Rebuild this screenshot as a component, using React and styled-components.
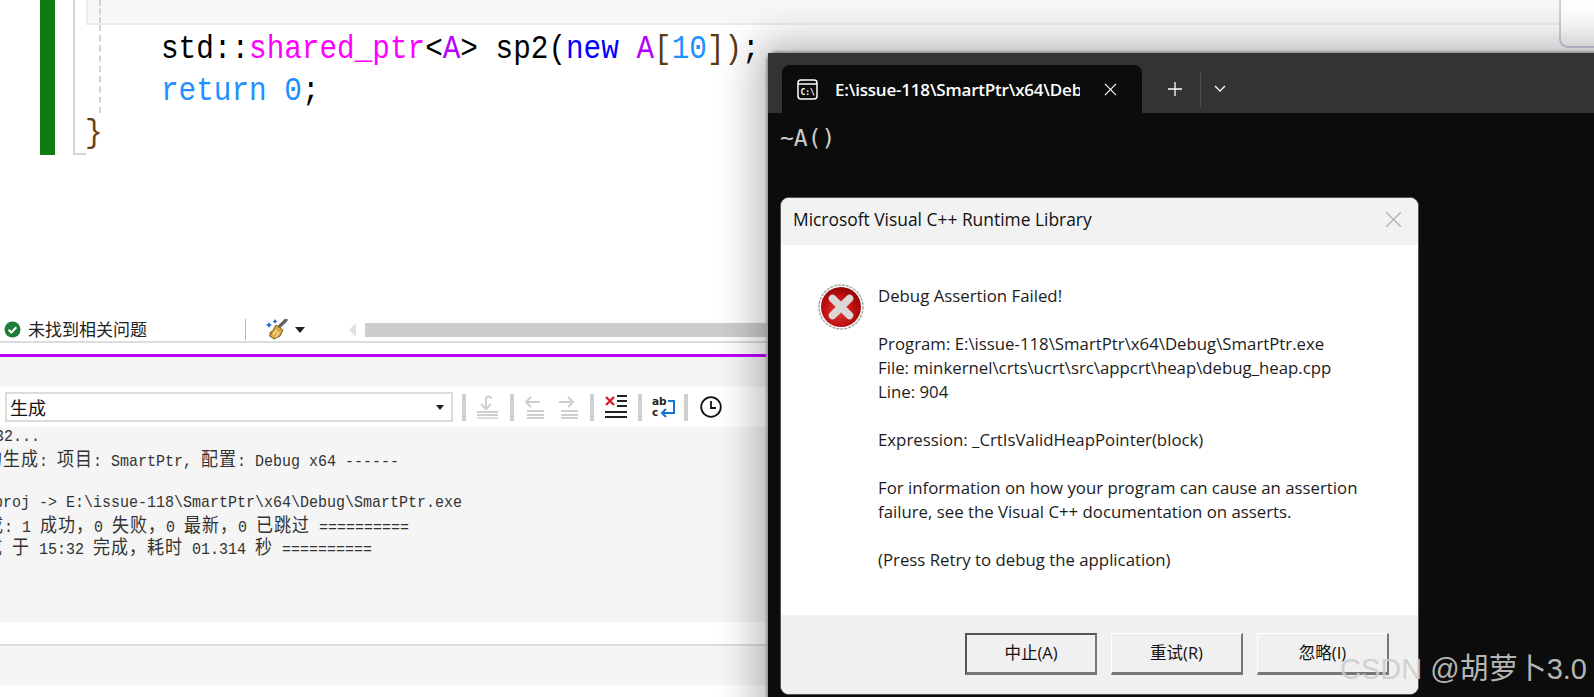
import React from 'react'
import styled, { createGlobalStyle } from 'styled-components'

const GlobalStyle = createGlobalStyle`
  html, body {
    margin: 0;
    padding: 0;
    background: #fff;
  }
`

const MONO = `'Liberation Mono', 'Noto Sans CJK SC', monospace`
const UI = `'Open Sans', 'Noto Sans CJK SC', sans-serif`

const Page = styled.div`
  position: relative;
  width: 1594px;
  height: 697px;
  overflow: hidden;
  background: #fff;
  display: flex;
  flex-direction: column;
`

/* editor */
const Editor = styled.section`
  height: 318px;
  display: flex;
  align-items: flex-start;
`
const ChangeBar = styled.div`
  width: 15px;
  height: 155px;
  margin-left: 40px;
  background: #107c10;
  flex: none;
`
const FoldLine = styled.div`
  width: 11px;
  height: 153px;
  margin-left: 18px;
  border-left: 2px solid #d4d4d4;
  border-bottom: 2px solid #d4d4d4;
  flex: none;
`
const CodeColumn = styled.div`
  flex: 1;
  min-width: 0;
`
const CurrentLine = styled.div`
  height: 23px;
  margin-right: 35px;
  padding-left: 11px;
  background: #f7f7f7;
  border-bottom: 2px solid #ececec;
  border-left: 2px solid #ececec;
`
const CurrentGuide = styled.div`
  height: 100%;
  border-left: 2px dashed #d2d2d2;
`
const Guide = styled.div`
  margin-left: 13px;
  border-left: 2px dashed #d2d2d2;
  padding-left: 60px;
  padding-top: 4px;
  height: 84px;
`
const CodeLine = styled.div`
  height: 42px;
  line-height: 42px;
  font-family: ${MONO};
  font-size: 29.35px;
  white-space: pre;
  color: #000;
  transform: scaleY(1.14);
`
const Brace = styled(CodeLine)`
  color: #6a4212;
  margin-left: -1px;
`
const Tok = styled.span`
  color: ${p => p.$c};
`

/* panel strip under the editor */
const StatusRow = styled.div`
  height: 23px;
  display: flex;
  align-items: center;
  border-bottom: 2px solid #dcdcdc;
`
const StatusText = styled.span`
  font-family: 'Noto Sans CJK SC', sans-serif;
  font-size: 17px;
  color: #222;
  margin-left: 7px;
  width: 217px;
  padding-bottom: 2px;
  flex: none;
`
const StatusIcon = styled.svg`
  margin-left: 4px;
  flex: none;
`
const StatusSep = styled.div`
  width: 1px;
  height: 21px;
  background: #b5b5b5;
  flex: none;
`
const BrushWrap = styled.div`
  display: flex;
  align-items: center;
  gap: 6px;
  margin-left: 20px;
  width: 83px;
  flex: none;
`
const BrushCaret = styled.div`
  width: 0;
  height: 0;
  border-left: 5px solid transparent;
  border-right: 5px solid transparent;
  border-top: 6px solid #222;
`
const ScrollArrow = styled.div`
  width: 0;
  height: 0;
  border-top: 7px solid transparent;
  border-bottom: 7px solid transparent;
  border-right: 7px solid #e2e2e2;
  flex: none;
`
const ScrollThumb = styled.div`
  flex: 1;
  height: 14px;
  margin-left: 9px;
  background: #cdcdcd;
`
const Accent = styled.div`
  height: 3px;
  margin-top: 11px;
  background: #bf00ff;
`
const PanelHeader = styled.div`
  height: 30px;
  background: #f5f5f5;
`
const Toolbar = styled.div`
  height: 40px;
  display: flex;
  align-items: center;
  padding-left: 5px;
`
const Combo = styled.div`
  width: 448px;
  height: 30px;
  box-sizing: border-box;
  border: 2px solid #dcdcdc;
  display: flex;
  align-items: center;
  justify-content: space-between;
  padding: 0 7px 0 3px;
  font-family: 'Noto Sans CJK SC', sans-serif;
  font-size: 18px;
  color: #111;
  flex: none;
`
const ComboCaret = styled.div`
  width: 0;
  height: 0;
  border-left: 4px solid transparent;
  border-right: 4px solid transparent;
  border-top: 5px solid #222;
`
const ToolSep = styled.div`
  width: 4px;
  height: 27px;
  background: #cfcfcf;
  flex: none;
  margin-left: ${p => p.$gap}px;
`
const ToolIcon = styled.svg`
  flex: none;
  margin-left: ${p => p.$gap}px;
`
const Output = styled.div`
  height: 195px;
  background: #f5f5f5;
  overflow: hidden;
`
const OutLine = styled.div`
  height: 22px;
  line-height: 22px;
  font-family: ${MONO};
  font-size: 15px;
  color: #333;
  white-space: pre;
  margin-left: ${p => p.$shift || 0}px;
  transform: scaleY(1.12);
`
const Wide = styled.span`
  font-family: 'Noto Sans CJK SC', sans-serif;
  font-size: 17px;
  line-height: 1;
  letter-spacing: 1px;
`
const Gap = styled.div`
  height: 22px;
  border-bottom: 2px solid #dcdcdc;
`
const BottomBand = styled.div`
  height: 39px;
  background: #f5f5f5;
`

/* terminal window sitting over the IDE */
const Terminal = styled.div`
  position: absolute;
  left: 768px;
  top: 53px;
  width: 860px;
  height: 680px;
  background: #0c0c0c;
  border-radius: 8px 0 0 0;
  box-shadow: 0 0 2px 2px #9a9a9a, 0 0 40px 12px rgba(0, 0, 0, 0.28);
`
const TitleBar = styled.div`
  height: 60px;
  background: #333;
  display: flex;
  align-items: flex-end;
  padding-left: 14px;
`
const Tab = styled.div`
  width: 360px;
  height: 48px;
  box-sizing: border-box;
  background: #0c0c0c;
  border-radius: 8px 8px 0 0;
  display: flex;
  align-items: center;
  padding-left: 15px;
  color: #fff;
  flex: none;
`
const TabTitle = styled.span`
  font-family: ${UI};
  font-size: 17px;
  font-weight: 600;
  letter-spacing: -0.2px;
  width: 245px;
  margin: 0 24px 0 17px;
  overflow: hidden;
  white-space: nowrap;
  flex: none;
`
const TabActions = styled.div`
  display: flex;
  align-items: center;
  height: 48px;
  margin-left: 25px;
`
const ActionSep = styled.div`
  width: 1px;
  height: 36px;
  background: #4c4c4c;
  margin: 0 13px 0 17px;
`
const Console = styled.div`
  padding: 12px 0 0 12px;
  font-family: 'DejaVu Sans Mono', monospace;
  font-size: 23px;
  line-height: 26px;
  color: #ccc;
`

const Dialog = styled.div`
  position: absolute;
  left: 12px;
  top: 144px;
  width: 639px;
  height: 498px;
  box-sizing: border-box;
  border: 1px solid #555;
  border-radius: 9px;
  overflow: hidden;
  background: #fff;
  display: flex;
  flex-direction: column;
`
const DialogHead = styled.div`
  height: 47px;
  box-sizing: border-box;
  background: #f2f2f2;
  display: flex;
  align-items: center;
  justify-content: space-between;
  padding: 0 16px 5px 12px;
  font-family: ${UI};
  font-size: 17.4px;
  color: #111;
  flex: none;
`
const DialogBody = styled.div`
  flex: 1;
  display: flex;
  padding: 39px 0 0 37px;
`
const ErrorIcon = styled.svg`
  flex: none;
`
const Message = styled.div`
  margin-left: 14px;
  font-family: ${UI};
  font-size: 16.8px;
  line-height: 24px;
  color: #1c1c1c;
  white-space: pre;
`
const DialogFoot = styled.div`
  height: 79px;
  background: #f0f0f0;
  display: flex;
  justify-content: flex-end;
  gap: 14px;
  padding: 18px 29px 0 0;
  box-sizing: border-box;
  flex: none;
`
const DlgButton = styled.div`
  width: 132px;
  height: 42px;
  box-sizing: border-box;
  padding-bottom: 3px;
  display: flex;
  align-items: center;
  justify-content: center;
  font-family: ${UI};
  font-size: 16.5px;
  color: #111;
  background: #f0f0f0;
  border-top: ${p => (p.$focus ? '2px solid #555' : '1px solid #fff')};
  border-left: ${p => (p.$focus ? '2px solid #555' : '1px solid #fff')};
  border-right: 2px solid #777;
  border-bottom: 3px solid #777;
`

const Watermark = styled.div`
  position: absolute;
  left: 1340px;
  top: 650px;
  font-family: 'Liberation Sans', 'Noto Sans CJK SC', sans-serif;
  font-size: 29px;
  line-height: 38px;
  color: rgba(205, 205, 205, 0.9);
  white-space: nowrap;
`
const Popup = styled.div`
  position: absolute;
  right: 0;
  top: -4px;
  width: 35px;
  height: 52px;
  box-sizing: border-box;
  background: #fff;
  border: 2px solid #cfcfe2;
  border-right: 0;
  border-radius: 0 0 0 9px;
`

const CheckIcon = () => (
  <StatusIcon width="17" height="17" viewBox="0 0 17 17">
    <circle cx="8.5" cy="8.5" r="8" fill="#1b7f37" />
    <path d="M4.6 8.8l2.7 2.7 5-5.2" fill="none" stroke="#fff" strokeWidth="2" />
  </StatusIcon>
)

const BrushIcon = () => (
  <svg width="23" height="21" viewBox="0 0 23 21">
    <path d="M13 8l7-7" stroke="#666" strokeWidth="3.4" strokeLinecap="round" />
    <path d="M10 6l7 5-3 6-6 3-5-3.5 3-2-2.5-.5 3.5-2.5z" fill="#d9a93c" stroke="#7d5a12" strokeWidth="1" />
    <path d="M7 16l4-5M10 18l3-5" stroke="#fff3cf" strokeWidth="1.2" />
    <path d="M3 3l1 2 2 1-2 1-1 2-1-2-2-1 2-1z" fill="#1e5fd0" />
    <path d="M9 0l.8 1.6L11.4 2.4l-1.6.8L9 4.8l-.8-1.6-1.6-.8 1.6-.8z" fill="#1e5fd0" />
  </svg>
)

const UnindentIcon = () => (
  <ToolIcon $gap={11} width="22" height="24" viewBox="0 0 22 24" fill="none" stroke="#cfcfcf" strokeWidth="2">
    <path d="M9 12V4a2.5 2.5 0 0 1 5 0M4 9l5 5 5-5" />
    <path d="M0 17h21M0 20h21" />
    <path d="M0 23h21" strokeWidth="1.5" />
  </ToolIcon>
)
const ArrowStackIcon = ({ gap, right }) => (
  <ToolIcon $gap={gap} width="21" height="24" viewBox="0 0 21 24" fill="none" stroke="#cfcfcf" strokeWidth="2">
    <path d={right ? 'M1 7h14M10 2l5 5-5 5' : 'M16 7H2M7 2L2 7l5 5'} />
    <path d="M3 16h17M3 20h17M3 23h17" />
  </ToolIcon>
)
const ClearIcon = () => (
  <ToolIcon $gap={11} width="23" height="27" viewBox="0 0 23 27" fill="none">
    <path d="M1 3l8 8M9 3l-8 8" stroke="#d81e2c" strokeWidth="2.4" />
    <path d="M12 2h10M12 7h10M12 12h10M0 18h22M0 23h22" stroke="#222" strokeWidth="2" />
  </ToolIcon>
)
const WrapIcon = () => (
  <ToolIcon $gap={10} width="24" height="25" viewBox="0 0 24 25" fill="none">
    <text x="0" y="10" fontFamily="'DejaVu Sans'" fontWeight="700" fontSize="10.5" fill="#222">ab</text>
    <text x="0" y="21" fontFamily="'DejaVu Sans'" fontWeight="700" fontSize="10.5" fill="#222">c</text>
    <path d="M16 6h6v12H10M14 14l-4 4 4 4" stroke="#1673d1" strokeWidth="2" />
  </ToolIcon>
)
const ClockIcon = () => (
  <ToolIcon $gap={12} width="22" height="22" viewBox="0 0 22 22" fill="none" stroke="#111" strokeWidth="1.8">
    <circle cx="11" cy="11" r="9.8" />
    <path d="M11 5v7h5" />
  </ToolIcon>
)

const ShellIcon = () => (
  <svg width="21" height="21" viewBox="0 0 21 21" fill="none">
    <rect x="1" y="1" width="19" height="19" rx="3" stroke="#fff" strokeWidth="1.5" />
    <path d="M1 5h19" stroke="#fff" strokeWidth="1.5" />
    <text x="3.4" y="15.5" fontFamily="'DejaVu Sans Mono'" fontWeight="700" fontSize="8" fill="#fff">C:\</text>
  </svg>
)
const CloseGlyph = ({ size, color, stroke }) => (
  <svg width={size} height={size} viewBox="0 0 14 14" fill="none" stroke={color} strokeWidth={stroke}>
    <path d="M1 1l12 12M13 1L1 13" />
  </svg>
)
const PlusIcon = () => (
  <svg width="16" height="16" viewBox="0 0 16 16" stroke="#fff" strokeWidth="1.3">
    <path d="M8 1v14M1 8h14" />
  </svg>
)
const ChevronIcon = () => (
  <svg width="12" height="8" viewBox="0 0 12 8" fill="none" stroke="#fff" strokeWidth="1.3">
    <path d="M1 1l5 5 5-5" />
  </svg>
)
const BigError = () => (
  <ErrorIcon width="46" height="46" viewBox="0 0 46 46">
    <defs>
      <radialGradient id="err" cx="45%" cy="60%" r="65%">
        <stop offset="0%" stopColor="#e83c3c" />
        <stop offset="60%" stopColor="#bc0e0e" />
        <stop offset="100%" stopColor="#860606" />
      </radialGradient>
    </defs>
    <circle cx="23" cy="23" r="22" fill="#fff" stroke="#a8a8a8" strokeWidth="1.5" strokeDasharray="3 1" />
    <circle cx="23" cy="23" r="20" fill="url(#err)" />
    <path d="M14.5 14.5l17 17M31.5 14.5l-17 17" stroke="#dcd8d8" strokeWidth="7.5" strokeLinecap="round" />
  </ErrorIcon>
)

const message = `Debug Assertion Failed!

Program: E:\\issue-118\\SmartPtr\\x64\\Debug\\SmartPtr.exe
File: minkernel\\crts\\ucrt\\src\\appcrt\\heap\\debug_heap.cpp
Line: 904

Expression: _CrtIsValidHeapPointer(block)

For information on how your program can cause an assertion
failure, see the Visual C++ documentation on asserts.

(Press Retry to debug the application)`

const App = () => {
  return (
    <Page>
      <GlobalStyle />
      <Editor>
        <ChangeBar />
        <FoldLine />
        <CodeColumn>
          <CurrentLine>
            <CurrentGuide />
          </CurrentLine>
          <Guide>
            <CodeLine>
              std::<Tok $c="#ff00ff">shared_ptr</Tok>&lt;<Tok $c="#b400ff">A</Tok>&gt; sp2(
              <Tok $c="#0000ff">new</Tok> <Tok $c="#b400ff">A</Tok>
              <Tok $c="#5a3a10">[</Tok>
              <Tok $c="#1e90ff">10</Tok>
              <Tok $c="#5a3a10">])</Tok>;
            </CodeLine>
            <CodeLine>
              <Tok $c="#1e90ff">return 0</Tok>;
            </CodeLine>
          </Guide>
          <Brace>{'}'}</Brace>
        </CodeColumn>
      </Editor>

      <StatusRow>
        <CheckIcon />
        <StatusText>未找到相关问题</StatusText>
        <StatusSep />
        <BrushWrap>
          <BrushIcon />
          <BrushCaret />
        </BrushWrap>
        <ScrollArrow />
        <ScrollThumb />
      </StatusRow>
      <Accent />
      <PanelHeader />
      <Toolbar>
        <Combo>
          生成
          <ComboCaret />
        </Combo>
        <ToolSep $gap={9} />
        <UnindentIcon />
        <ToolSep $gap={11} />
        <ArrowStackIcon gap={10} />
        <ArrowStackIcon gap={13} right />
        <ToolSep $gap={11} />
        <ClearIcon />
        <ToolSep $gap={10} />
        <WrapIcon />
        <ToolSep $gap={8} />
        <ClockIcon />
      </Toolbar>
      <Output>
        <OutLine $shift={-5}>32...</OutLine>
        <OutLine $shift={-15}>
          <Wide>的生成</Wide>: <Wide>项目</Wide>: SmartPtr, <Wide>配置</Wide>: Debug x64 ------
        </OutLine>
        <OutLine />
        <OutLine $shift={-6}>proj -&gt; E:\issue-118\SmartPtr\x64\Debug\SmartPtr.exe</OutLine>
        <OutLine $shift={-14}>
          <Wide>成</Wide>: 1 <Wide>成功，</Wide>0 <Wide>失败，</Wide>0 <Wide>最新，</Wide>0 <Wide>已跳过</Wide> ==========
        </OutLine>
        <OutLine $shift={-15}>
          <Wide>成</Wide> <Wide>于</Wide> 15:32 <Wide>完成，耗时</Wide> 01.314 <Wide>秒</Wide> ==========
        </OutLine>
      </Output>
      <Gap />
      <BottomBand />

      <Popup />

      <Terminal>
        <TitleBar>
          <Tab>
            <ShellIcon />
            <TabTitle>E:\issue-118\SmartPtr\x64\Debug\SmartPtr.exe</TabTitle>
            <CloseGlyph size={13} color="#fff" stroke={1.2} />
          </Tab>
          <TabActions>
            <PlusIcon />
            <ActionSep />
            <ChevronIcon />
          </TabActions>
        </TitleBar>
        <Console>~A()</Console>
        <Dialog>
          <DialogHead>
            Microsoft Visual C++ Runtime Library
            <CloseGlyph size={17} color="#b4b4b4" stroke={1.2} />
          </DialogHead>
          <DialogBody>
            <BigError />
            <Message>{message}</Message>
          </DialogBody>
          <DialogFoot>
            <DlgButton $focus>中止(A)</DlgButton>
            <DlgButton>重试(R)</DlgButton>
            <DlgButton>忽略(I)</DlgButton>
          </DialogFoot>
        </Dialog>
      </Terminal>

      <Watermark>CSDN @胡萝卜3.0</Watermark>
    </Page>
  )
}

export default App
